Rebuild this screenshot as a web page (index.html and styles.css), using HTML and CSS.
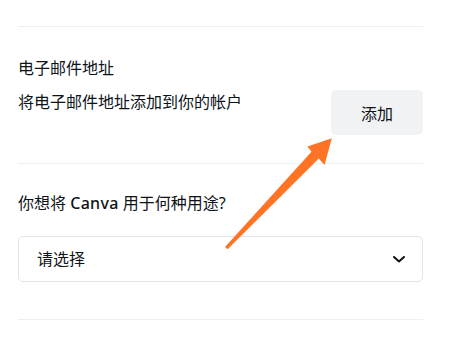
FILE: index.html
```html
<!DOCTYPE html>
<html lang="zh-CN">
<head>
<meta charset="utf-8">
<link rel="stylesheet" href="styles.css">
</head>
<body>
<div class="page">
  <hr class="divider">
  <section class="section email">
    <div class="label">电子邮件地址</div>
    <div class="row">
      <div class="desc">将电子邮件地址添加到你的帐户</div>
      <button class="btn">添加</button>
    </div>
  </section>
  <hr class="divider">
  <section class="section usage">
    <div class="label">你想将 <span class="latin">Canva</span> 用于何种用途?</div>
    <div class="select">
      <span>请选择</span>
      <svg class="chev" width="12" height="7" viewBox="0 0 12 7"><path d="M1 1l5 4.5L11 1" fill="none" stroke="#0e1318" stroke-width="2" stroke-linecap="round" stroke-linejoin="round"/></svg>
    </div>
  </section>
  <hr class="divider">
  <svg class="arrow" width="450" height="343" viewBox="0 0 450 343">
    <polygon points="331.8,138.2 324.5,165 318.8,158.6 227.6,249.2 225,247 311.5,151.8 307.5,146.6" fill="#ff7325"/>
  </svg>
</div>
</body>
</html>
```
FILE: styles.css
```css
html, body {
  margin: 0;
  padding: 0;
  background: #ffffff;
}
body {
  font-family: "Noto Sans", "Noto Sans CJK SC", sans-serif;
  color: #0e1318;
  font-size: 16px;
  line-height: 24px;
}
.page {
  width: 405px;
  margin-left: 18px;
  padding-top: 26px;
}
.divider {
  margin: 0;
  border: 0;
  height: 1px;
  background: #eeeff1;
}
.section.email {
  padding: 29px 0 28px;
}
.row {
  display: flex;
  justify-content: space-between;
  align-items: flex-start;
  margin-top: 10px;
}
.btn {
  width: 92px;
  height: 45px;
  border: 0;
  border-radius: 5px;
  background: #f1f2f4;
  color: #0e1318;
  font-family: inherit;
  font-size: 16px;
  padding: 0;
}
.section.usage {
  padding: 27px 0 37px;
}
.latin {
  font-weight: 500;
  letter-spacing: 0.3px;
}
.select {
  margin-top: 21px;
  height: 44px;
  border: 1px solid #e2e4e7;
  border-radius: 5px;
  display: flex;
  align-items: center;
  justify-content: space-between;
  padding: 0 17px 0 18px;
}
.chev {
  display: block;
  margin-top: 1px;
}
.arrow {
  position: absolute;
  left: 0;
  top: 0;
  pointer-events: none;
}
```
